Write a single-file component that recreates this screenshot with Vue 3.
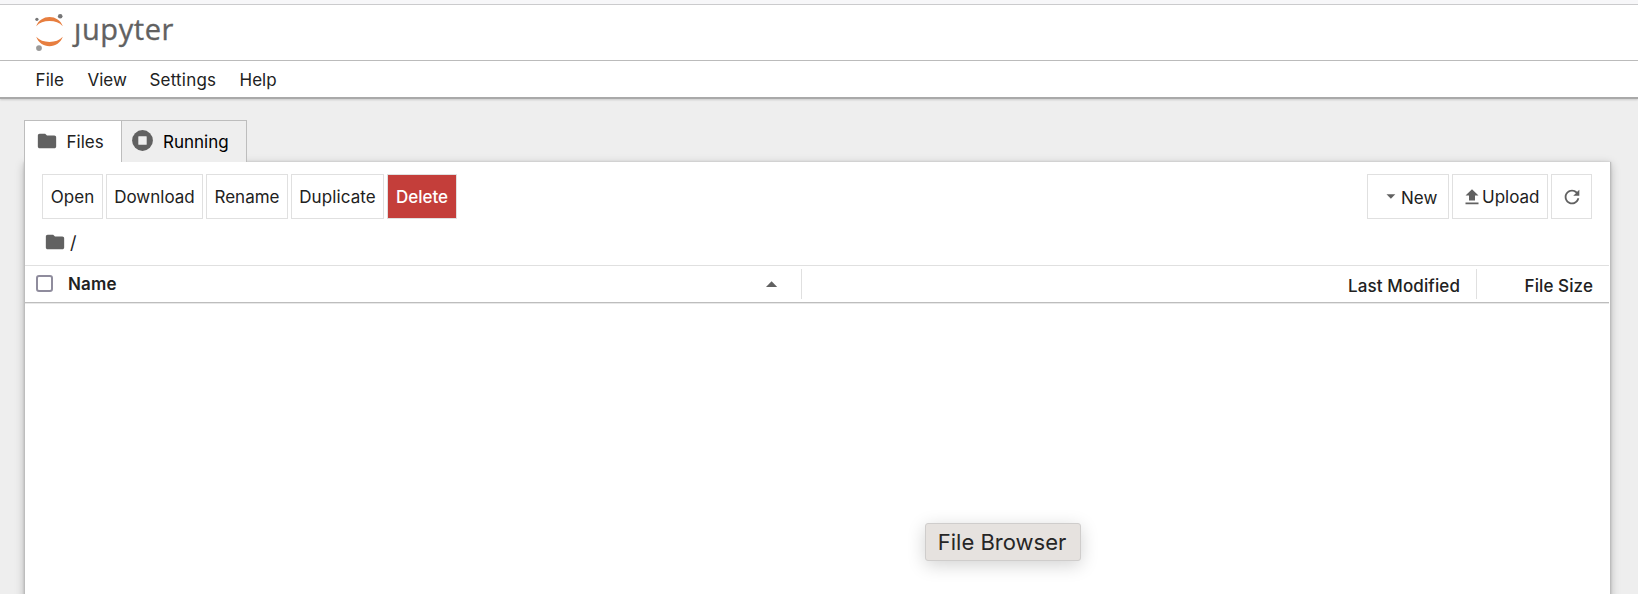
<script setup>
const menus = [
  { label: 'File', cls: 'm-file' },
  { label: 'View', cls: 'm-view' },
  { label: 'Settings', cls: 'm-settings' },
  { label: 'Help', cls: 'm-help' },
]
const actions = [
  { label: 'Open', cls: 'open' },
  { label: 'Download', cls: 'download' },
  { label: 'Rename', cls: 'rename' },
  { label: 'Duplicate', cls: 'duplicate' },
  { label: 'Delete', cls: 'delete' },
]
const folder = 'M10 4H4c-1.1 0-1.99.9-1.99 2L2 18c0 1.1.9 2 2 2h16c1.100 0 2-.9 2-2V8c0-1.100-.9-2-2-2h-8l-2-2z'
</script>

<template>
  <div class="app">
    <div class="strip"></div>
    <header class="top">
      <svg class="mark" width="30" height="40" viewBox="0 0 30 40">
        <path d="M1.200 13.200C3.200 7.400 8.600 4 14.500 4s11.300 3.400 13.300 9.200C24.600 9.800 19.900 8.100 14.500 8.100S4.400 9.800 1.200 13.200z" fill="#e77e3f" />
        <path d="M1.200 23.800C3.200 29.600 8.600 33.200 14.500 33.200s11.300-3.600 13.300-9.400C24.600 27.200 19.900 29 14.500 29S4.400 27.200 1.200 23.800z" fill="#e77e3f" />
        <circle cx="25.200" cy="3.300" r="2.300" fill="#767677" />
        <circle cx="1.900" cy="6.300" r="1.600" fill="#767677" />
        <circle cx="4" cy="35.100" r="2.900" fill="#9a9a9a" />
      </svg>
      <span class="word">ȷupyter</span>
    </header>
    <nav class="menu">
      <span v-for="m in menus" :key="m.label" :class="m.cls">{{ m.label }}</span>
    </nav>
    <main class="main">
      <div class="tabs">
        <div class="tab active">
          <svg class="tab-folder" width="22" height="22" viewBox="0 0 24 24"><path :d="folder" fill="#616161" /></svg>
          <span class="files">Files</span>
        </div>
        <div class="tab second">
          <svg class="stop" width="21" height="21" viewBox="0 0 21 21">
            <circle cx="10.500" cy="10.500" r="10.400" fill="#616161" />
            <rect x="6.300" y="6.300" width="8.400" height="8.400" rx=".5" fill="#eee" />
          </svg>
          <span class="running">Running</span>
        </div>
      </div>
      <section class="panel">
        <div class="toolbar">
          <button v-for="a in actions" :key="a.label" :class="a.cls"><span>{{ a.label }}</span></button>
          <div class="spacer"></div>
          <button class="new">
            <svg width="10" height="5" viewBox="0 0 10 5"><path d="M.5.200h8.800L4.900 4.700z" fill="#616161" /></svg>
            <span>New</span>
          </button>
          <button class="upload">
            <svg width="14" height="16" viewBox="0 0 14 16"><path d="M4 11.500h6V6.500h3.500L7 .2.500 6.500H4zM.5 13.500h13v1.800H.5z" fill="#616161" /></svg>
            <span>Upload</span>
          </button>
          <button class="refresh">
            <svg width="22" height="22" viewBox="0 0 18 18"><path d="M9 13.500c-2.490 0-4.500-2.010-4.500-4.500S6.510 4.500 9 4.500c1.240 0 2.360.52 3.170 1.330L10 8h5V3l-1.760 1.760C12.150 3.680 10.660 3 9 3 5.690 3 3.010 5.690 3.010 9S5.690 15 9 15c2.970 0 5.430-2.160 5.900-5h-1.520c-.46 2-2.240 3.500-4.380 3.500z" fill="#616161" /></svg>
          </button>
        </div>
        <div class="crumbs">
          <svg width="22" height="22" viewBox="0 0 24 24"><path :d="folder" fill="#616161" /></svg>
          <span>/</span>
        </div>
        <div class="head">
          <div class="name-col">
            <span class="check"></span>
            <span class="name">Name</span>
            <svg class="sort" width="12" height="6" viewBox="0 0 12 6"><path d="M0 6h11.200L5.600.2z" fill="#616161" /></svg>
          </div>
          <div class="mod-col"><span>Last Modified</span></div>
          <div class="size-col"><span>File Size</span></div>
        </div>
      </section>
    </main>
    <div class="tip"><span>File Browser</span></div>
  </div>
</template>

<style>
body { background: #eee; overflow: hidden; }
</style>

<style scoped>
* { box-sizing: border-box; }
.app {
  position: relative;
  height: 594px;
  overflow: hidden;
  background: #eee;
  color: #212121;
  font: 17px/20px Inter, "Liberation Sans", sans-serif;
  display: flex;
  flex-direction: column;
}
svg { display: block; flex: none; }
span { white-space: nowrap; }
.strip { height: 5px; flex: none; background: #f7f7f9; border-bottom: 1px solid #cbcbcd; }
.top { height: 56px; flex: none; background: #fff; border-bottom: 1px solid #bdbdbd; display: flex; align-items: flex-start; padding: 8px 0 0 35px; }
.word { font: 29px/40px "Open Sans", sans-serif; color: #616161; margin: -4px 0 0 9px; letter-spacing: .6px; -webkit-text-stroke: .35px #616161; }
.menu { height: 38px; flex: none; background: #fff; border-bottom: 2px solid #a9a9a9; display: flex; padding: 9px 0 0 35.500px; box-shadow: 0 1px 2px rgba(0,0,0,.15); }
.m-file { width: 52px; letter-spacing: .1px; }
.m-view { width: 62px; }
.m-settings { width: 90px; letter-spacing: .2px; }
.main { flex: 1; display: flex; flex-direction: column; padding: 21px 27px 0 24px; }
.tabs { display: flex; height: 42px; flex: none; position: relative; z-index: 1; }
.tab { display: flex; align-items: center; border: 1px solid #bdbdbd; border-bottom: 0; }
.active { width: 98px; background: #fff; padding-left: 11px; height: 42px; }
.tab-folder { margin-top: -2px; }
.files { margin-left: 8.500px; }
.second { width: 126px; margin-left: -1px; background: #eee; padding-left: 10px; color: #000; }
.stop { margin-top: -2px; }
.running { margin-left: 10px; }
.panel { flex: 1; background: #fff; border-left: 1px solid #bdbdbd; border-right: 1px solid #bdbdbd; box-shadow: 0 0 2px rgba(0,0,0,.16), 0 2px 9px rgba(0,0,0,.22); padding: 12px 0 0 17px; margin-bottom: -20px; }
.toolbar { display: flex; gap: 3px; height: 45px; padding-right: 18px; }
button { height: 45px; margin: 0; padding: 0; border: 1px solid #e0e0e0; background: #fff; color: #212121; font: inherit; display: flex; align-items: center; justify-content: center; }
.open { width: 61px; }
.download { width: 97px; }
.rename { width: 82px; }
.duplicate { width: 93px; letter-spacing: .1px; }
.delete { width: 70px; background: #c43e3a; color: #fff; font-weight: 500; }
.spacer { flex: 1; }
.new { width: 82px; justify-content: flex-start; padding-left: 18px; }
.new span { margin: 2px 0 0 5px; }
.upload { width: 96px; justify-content: flex-start; padding-left: 12px; }
.upload span { margin-left: 3px; }
.refresh { width: 41px; }
.crumbs { display: flex; align-items: center; height: 46px; padding: 1px 0 0 2px; }
.crumbs svg { margin-top: -1px; }
.crumbs span { margin-left: 4px; font-size: 18px; }
.head { height: 38px; margin: 0 1px 0 -17px; border-top: 1px solid #e0e0e0; border-bottom: 1px solid #bdbdbd; display: flex; box-shadow: 0 1px 0 #e8e8e8; padding: 3px 0; font-weight: 600; }
.name-col { width: 777px; border-right: 1px solid #e0e0e0; display: flex; align-items: center; padding-left: 11px; }
.check { width: 17px; height: 17px; margin-top: -1px; border: 2px solid #8f8c9d; border-radius: 3px; }
.name { margin-left: 15px; letter-spacing: .15px; }
.sort { margin: -1px 23px 0 auto; }
.mod-col { flex: 1; border-right: 1px solid #e0e0e0; display: flex; justify-content: flex-end; align-items: center; padding: 4px 16px 0 0; font-weight: 500; letter-spacing: .1px; }
.size-col { width: 132px; display: flex; justify-content: flex-end; align-items: center; padding: 4px 16px 0 0; font-weight: 500; letter-spacing: .1px; }
.tip { position: absolute; left: 925px; top: 523px; width: 156px; height: 38px; background: #e6e2df; border: 1px solid #cfcdcc; border-radius: 3px; box-shadow: 0 4px 18px rgba(0,0,0,.18); display: flex; align-items: center; justify-content: center; padding-right: 2px; font-size: 22px; line-height: 26px; color: #262626; }
</style>
